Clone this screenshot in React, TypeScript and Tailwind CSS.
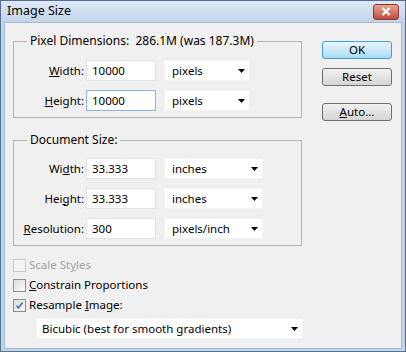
import type { ReactNode } from 'react';

function Arrow() {
  return (
    <svg width="7" height="4" viewBox="0 0 7 4" className="shrink-0">
      <path d="M0 0h7L3.5 4z" fill="#000" />
    </svg>
  );
}

function Field({ label, value, focused }: { label: ReactNode; value: string; focused?: boolean }) {
  return (
    <>
      <div className="w-[72px] pr-[2px] text-right">{label}</div>
      <div
        className={`w-[70px] h-[21px] bg-white border flex items-center pl-[5px] ${
          focused ? 'border-[#8fb3dc]' : 'border-[#e2e2e2]'
        }`}
      >
        {value}
      </div>
    </>
  );
}

function Select({ value, width }: { value: string; width: string }) {
  return (
    <div className={`${width} h-[21px] ml-[8px] bg-white border border-[#f4f4f4] flex items-center justify-between pl-[7px] pr-[4px]`}>
      <span>{value}</span>
      <Arrow />
    </div>
  );
}

function Row({ children }: { children: ReactNode }) {
  return <div className="flex items-center h-[21px]">{children}</div>;
}

function Check({ label, checked, disabled }: { label: ReactNode; checked?: boolean; disabled?: boolean }) {
  return (
    <div className="flex items-center h-[20px]">
      <div
        className={`w-[13px] h-[13px] border flex items-center justify-center ${
          disabled ? 'border-[#c8c8c8] bg-[#f4f4f4]' : 'border-[#8e8f8f] bg-gradient-to-br from-[#dcdcdc] to-[#fbfbfb]'
        }`}
      >
        {checked && (
          <svg width="9" height="9" viewBox="0 0 9 9">
            <path d="M1.5 4.5l2 2.5L7.5 1.5" stroke="#4a6fb5" strokeWidth="1.6" fill="none" />
          </svg>
        )}
      </div>
      <span className={`ml-[3px] ${disabled ? 'text-[#a3a3a3]' : ''}`}>{label}</span>
    </div>
  );
}

function Button({ children, primary }: { children: ReactNode; primary?: boolean }) {
  return (
    <div
      className={`w-[70px] h-[18px] rounded-[3px] border flex items-center justify-center ${
        primary
          ? 'border-[#3c9fd6] bg-gradient-to-b from-[#eaf6fd] to-[#a9dbf6]'
          : 'border-[#707070] bg-gradient-to-b from-[#f2f2f2] to-[#d5d5d5]'
      }`}
    >
      {children}
    </div>
  );
}

export default function App() {
  return (
    <div className="w-[406px] h-[352px] border border-[#55708f] bg-[#c3d4ea] flex flex-col font-['Noto_Sans',sans-serif] text-[11.5px] text-black leading-none">
      {/* title bar */}
      <div className="h-[21px] flex items-center justify-between pl-[6px] pr-[6px] bg-gradient-to-b from-[#dde8f5] to-[#c3d4ea]">
        <span className="text-[12.5px]">Image Size</span>
        <div className="w-[26px] h-[16px] rounded-[3px] border border-[#8a3a34] bg-gradient-to-b from-[#e8a393] to-[#c0493a] flex items-center justify-center">
          <svg width="10" height="9" viewBox="0 0 10 9">
            <path d="M1.5 1l7 7M8.5 1l-7 7" stroke="#fff" strokeWidth="2.2" />
          </svg>
        </div>
      </div>

      {/* client */}
      <div className="flex-1 mx-[3px] mb-[2px] bg-[#f0f0f0] border border-[#a7b9cf] flex pl-[8px] pt-[10px]">
        <div className="w-[289px] flex flex-col">
          <fieldset className="border border-[#b4b4b4] pb-[6px]">
            <legend className="ml-[13px] px-[3px] leading-[16px] text-[12px]">
              Pixel Dimensions:&nbsp;&nbsp;286.1M (was 187.3M)
            </legend>
            <div className="mt-[11px] flex flex-col gap-[9px]">
              <Row>
                <Field label={<><u>W</u>idth:</>} value="10000" />
                <Select value="pixels" width="w-[86px]" />
              </Row>
              <Row>
                <Field label={<><u>H</u>eight:</>} value="10000" focused />
                <Select value="pixels" width="w-[86px]" />
              </Row>
            </div>
          </fieldset>

          <fieldset className="mt-[14px] border border-[#b4b4b4] pb-[6px]">
            <legend className="ml-[13px] px-[3px] leading-[16px] text-[12px]">Document Size:</legend>
            <div className="mt-[10px] flex flex-col gap-[9px]">
              <Row>
                <Field label={<>Wi<u>d</u>th:</>} value="33.333" />
                <Select value="inches" width="w-[99px]" />
              </Row>
              <Row>
                <Field label={<>Hei<u>g</u>ht:</>} value="33.333" />
                <Select value="inches" width="w-[99px]" />
              </Row>
              <Row>
                <Field label={<><u>R</u>esolution:</>} value="300" />
                <Select value="pixels/inch" width="w-[99px]" />
              </Row>
            </div>
          </fieldset>

          <div className="mt-[9px] flex flex-col">
            <Check label={<>Scale St<u>y</u>les</>} disabled />
            <Check label={<><u>C</u>onstrain Proportions</>} />
            <Check label={<>Resample <u>I</u>mage:</>} checked />
          </div>

          <div className="mt-[3px] ml-[23px] w-[267px] h-[21px] bg-white border border-[#f4f4f4] flex items-center justify-between pl-[5px] pr-[4px]">
            <span>Bicubic (best for smooth gradients)</span>
            <Arrow />
          </div>
        </div>

        <div className="ml-[20px] pt-[8px] flex flex-col">
          <Button primary>OK</Button>
          <div className="mt-[9px]">
            <Button>Reset</Button>
          </div>
          <div className="mt-[17px]">
            <Button>
              <span>
                <u>A</u>uto...
              </span>
            </Button>
          </div>
        </div>
      </div>
    </div>
  );
}
